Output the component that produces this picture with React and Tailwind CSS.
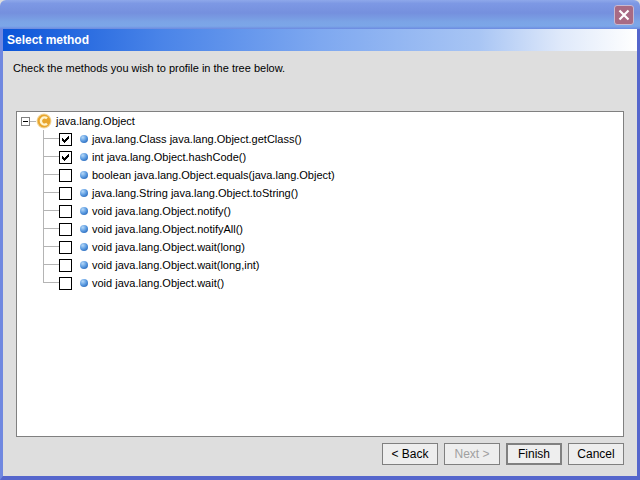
const methods = [
  { label: "java.lang.Class java.lang.Object.getClass()", checked: true },
  { label: "int java.lang.Object.hashCode()", checked: true },
  { label: "boolean java.lang.Object.equals(java.lang.Object)", checked: false },
  { label: "java.lang.String java.lang.Object.toString()", checked: false },
  { label: "void java.lang.Object.notify()", checked: false },
  { label: "void java.lang.Object.notifyAll()", checked: false },
  { label: "void java.lang.Object.wait(long)", checked: false },
  { label: "void java.lang.Object.wait(long,int)", checked: false },
  { label: "void java.lang.Object.wait()", checked: false },
];

const ClassIcon = () => (
  <svg width="16" height="16" viewBox="0 0 16 16" className="shrink-0">
    <circle cx="8" cy="8" r="7.5" fill="#f3d9a0" />
    <circle cx="8" cy="8" r="6.5" fill="#e8a62e" />
    <path d="M11 5.4A3.6 3.6 0 1 0 11 10.6" fill="none" stroke="#fff4cf" strokeWidth="2.4" />
  </svg>
);

const MethodDot = () => (
  <svg width="8" height="8" viewBox="0 0 8 8" className="shrink-0">
    <defs>
      <radialGradient id="methodFill" cx="0.35" cy="0.3" r="0.75">
        <stop offset="0" stopColor="#b5d8f8" />
        <stop offset="0.6" stopColor="#5a9ae0" />
        <stop offset="1" stopColor="#3070c0" />
      </radialGradient>
    </defs>
    <circle cx="4" cy="4" r="4" fill="url(#methodFill)" />
  </svg>
);

const Check = () => (
  <svg width="11" height="11" viewBox="0 0 11 11" shapeRendering="crispEdges">
    <path d="M2 4h1v1h1v1h1V5h1V4h1V3h1V2h1v3H8v1H7v1H6v1H5v1H4V8H3V7H2z" fill="#000" />
  </svg>
);

const Button = ({ children, disabled, primary }) => (
  <button
    type="button"
    disabled={disabled}
    className={`h-[22px] w-[56px] bg-[#eeeeee] text-[12px] leading-none ${
      primary ? "border-2 border-[#808080]" : "border border-[#808080]"
    } ${disabled ? "text-[#a0a0a0]" : "text-black"}`}
  >
    {children}
  </button>
);

const Row = ({ method, last }) => (
  <div className="flex h-[18px] items-center">
    <div className="flex h-full w-[16px] shrink-0 flex-col">
      <div className="h-[9px] border-b border-l border-[#b4b4b4]" />
      <div className={`h-[9px] ${last ? "" : "border-l border-[#b4b4b4]"}`} />
    </div>
    <div className="flex h-[13px] w-[13px] shrink-0 items-center justify-center border border-black bg-white">
      {method.checked && <Check />}
    </div>
    <div className="ml-[8px] mr-[4px] flex shrink-0 items-center">
      <MethodDot />
    </div>
    <span className="whitespace-nowrap">{method.label}</span>
  </div>
);

export default function App() {
  return (
    <div className="flex h-[480px] w-[640px] flex-col overflow-hidden bg-[#dedede] font-['Liberation_Sans',sans-serif] text-[11px] text-black">
      {/* Title bar */}
      <div className="flex h-[29px] shrink-0 items-center justify-end rounded-t-[6px] bg-[linear-gradient(to_bottom,#8ea8ea_0%,#7d98e4_12%,#7590de_45%,#7ba4e6_75%,#7ca6e8_90%,#6c8ae0_100%)] pr-[6px]">
        <div className="flex h-[20px] w-[20px] items-center justify-center rounded-[3px] border border-[#c8b8d0] bg-[#a86a84]">
          <svg width="12" height="12" viewBox="0 0 12 12">
            <path d="M1.5 1.5l9 9M10.5 1.5l-9 9" stroke="#fff" strokeWidth="2.2" />
          </svg>
        </div>
      </div>

      <div className="flex min-h-0 flex-1 flex-col border-r-[3px] border-b-[4px] border-l-[3px] border-r-[#5566cc] border-b-[#5566cc] border-l-[#7088e0]">
        {/* Banner */}
        <div className="flex h-[22px] shrink-0 items-center bg-[linear-gradient(to_right,#0a54d8_0%,#4a84e8_25%,#7ea8f0_50%,#a8c5f4_75%,#dfe9fa_88%,#ffffff_100%)] pl-[4px] text-[12px] font-bold text-white">
          Select method
        </div>

        <p className="mt-[10px] ml-[10px] leading-[14px]">Check the methods you wish to profile in the tree below.</p>

        {/* Tree */}
        <div className="mt-[36px] mr-[13px] ml-[13px] h-[326px] shrink-0 border border-[#808080] bg-white pl-[4px]">
          <div className="flex h-[18px] items-center">
            <div className="flex h-[9px] w-[9px] shrink-0 items-center justify-center border border-[#808080]">
              <div className="h-px w-[5px] bg-black" />
            </div>
            <div className="h-px w-[6px] shrink-0 bg-[#b4b4b4]" />
            <ClassIcon />
            <span className="ml-[4px]">java.lang.Object</span>
          </div>
          <div className="ml-[22px]">
            {methods.map((method, i) => (
              <Row key={method.label} method={method} last={i === methods.length - 1} />
            ))}
          </div>
        </div>

        {/* Buttons */}
        <div className="mt-[6px] mr-[13px] flex justify-end gap-[6px]">
          <Button>&lt; Back</Button>
          <Button disabled>Next &gt;</Button>
          <Button primary>Finish</Button>
          <Button>Cancel</Button>
        </div>
      </div>
    </div>
  );
}
